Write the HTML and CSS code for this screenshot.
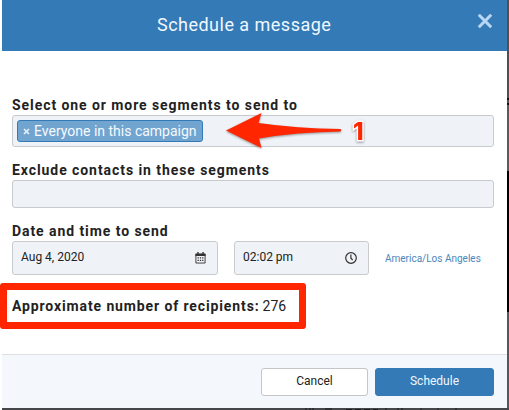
FILE: index.html
```html
<!DOCTYPE html>
<html lang="en">
<head>
<meta charset="utf-8">
<title>Schedule a message</title>
<link rel="stylesheet" href="styles.css">
</head>
<body>
<div class="screen">
  <main class="modal">
    <header class="modal-header">
      <h1 class="title"><span>Schedule a message</span></h1>
      <svg class="close" viewBox="0 0 16 16"><path d="M1.8 1.8 14.2 14.2M14.2 1.8 1.8 14.2"/></svg>
    </header>
    <section class="modal-body">
      <div class="label label-a"><span>Select one or more segments to send to</span></div>
      <div class="field segments">
        <div class="tag"><svg class="tag-x" viewBox="0 0 7 7"><path d="M1 1 6 6M6 1 1 6"/></svg><span>Everyone in this campaign</span></div>
        <svg class="arrow" viewBox="0 0 155 42"><path d="M4 19.500 39.500 2 36.500 12Q75 17.500 118.500 18Q120 19 118.500 20.500Q75 21 37 27.500L39.500 37Z"/></svg>
        <span class="marker">1</span>
      </div>
      <div class="label label-b"><span>Exclude contacts in these segments</span></div>
      <div class="field exclude"></div>
      <div class="label label-c"><span>Date and time to send</span></div>
      <div class="when">
        <div class="field date"><span>Aug 4, 2020</span>
          <svg class="calendar" viewBox="0 0 12 13"><path class="line" d="M1 2.2H11V12H1Z"/><path class="solid" d="M.5 1.8H11.500V4.300H.5ZM2.500 0H4V2.500H2.500ZM8 0H9.500V2.500H8ZM2.800 5.700H4.200V7.100H2.800ZM5.300 5.700H6.700V7.100H5.300ZM7.800 5.700H9.200V7.100H7.800ZM2.800 8.500H4.200V9.900H2.800ZM5.300 8.500H6.700V9.900H5.300ZM7.800 8.500H9.200V9.900H7.800Z"/></svg>
        </div>
        <div class="field time"><span>02:02 pm</span>
          <svg class="clock" viewBox="0 0 12 12"><circle cx="6" cy="6" r="5.300"/><path d="M5.900 2.600V6.200L7.700 8"/></svg>
        </div>
        <a class="zone"><span>America/Los Angeles</span></a>
      </div>
      <div class="recipients"><b>Approximate number of recipients:</b><span>276</span></div>
    </section>
    <footer class="modal-footer">
      <button class="btn cancel"><span>Cancel</span></button>
      <button class="btn schedule"><span>Schedule</span></button>
    </footer>
  </main>
  <div class="page-edge"></div>
  <svg class="page-below" viewBox="0 0 507 2"><path d="M304 0V2M308 0V2M311 0V2M323 1H330M344 1.500H350M353 1.500H359M362 1.500H368M371 1.500H376M384 0V2M396 0V2M400 0V2M419 .5V2M436 .5V2M454 0V2"/></svg>
</div>
</body>
</html>
```
FILE: styles.css
```css
* { box-sizing: border-box; }
body {
  margin: 0;
  width: 509px;
  height: 410px;
  overflow: hidden;
  background: #fff;
  font-family: Roboto, sans-serif;
  color: #222;
}
.screen {
  display: grid;
  grid-template-columns: 505px 2px;
  grid-template-rows: 408px 2px;
  margin-left: 2px;
  background: #454649;
}
.page-edge {
  background: linear-gradient(#4f5052 98px, #111 98px 100px, #505153 100px 103px, #111 103px 105px, #5a5b5d 105px 171px, #000 171px 312px, #55585a 312px);
}
.page-below {
  grid-column: 1 / 3;
  width: 507px;
  height: 2px;
  fill: none;
  stroke: #1b1b1d;
}
.modal {
  display: flex;
  flex-direction: column;
  background: #fff;
}
.modal-header {
  position: relative;
  height: 51px;
  background: #347ab7;
  color: #f0f8ff;
}
.title {
  margin: 0;
  padding-left: 155px;
  font-size: 18px;
  font-weight: 400;
  line-height: 49px;
  letter-spacing: .48px;
}
.close {
  position: absolute;
  left: 475px;
  top: 13px;
  width: 16px;
  height: 16px;
  fill: none;
  stroke: #b9d7f3;
  stroke-width: 3;
}
.modal-body {
  height: 303px;
  padding: 46px 13px 0 10px;
}
.label {
  padding-bottom: 2px;
  font-size: 14px;
  font-weight: 700;
  line-height: 16px;
  letter-spacing: .93px;
  white-space: nowrap;
}
.label-b { margin-top: 15px; }
.label-c { margin-top: 15px; }
.field {
  border: 1px solid #c8cacd;
  border-radius: 3px;
  background: #eff2f7;
}
.segments {
  position: relative;
  height: 32px;
  padding: 4px;
}
.tag {
  display: flex;
  align-items: center;
  gap: 4px;
  width: 186px;
  height: 22px;
  padding-left: 5px;
  border: 1px solid #347ab7;
  border-radius: 3px;
  background: #72a4d0;
  color: #f5faff;
  font-size: 14px;
  white-space: nowrap;
}
.tag-x {
  width: 7px;
  height: 7px;
  fill: none;
  stroke: #e5f0fa;
  stroke-width: 1.700;
}
.arrow {
  position: absolute;
  left: 209px;
  top: -5px;
  width: 155px;
  height: 42px;
  fill: #ff2600;
  filter: drop-shadow(0 1px 1px #0006);
}
.marker {
  position: absolute;
  left: 340px;
  top: 2px;
  color: #ff2600;
  font: 800 24px/28px Inter, sans-serif;
  -webkit-text-stroke: 3px #fff;
  paint-order: stroke fill;
  filter: drop-shadow(0 1px 1px #0006);
}
.exclude { height: 28px; }
.when {
  display: flex;
  align-items: center;
}
.date, .time {
  display: flex;
  align-items: center;
  justify-content: space-between;
  height: 34px;
  padding: 0 11px 2px 8px;
  font-size: 12px;
}
.date { width: 206px; }
.time { width: 135px; margin-left: 16px; }
.calendar, .clock { position: relative; top: 1px; }
.calendar { width: 11px; height: 12px; }
.calendar .line { fill: none; stroke: #333; }
.calendar .solid { fill: #333; }
.clock {
  width: 12px;
  height: 12px;
  fill: none;
  stroke: #333;
  stroke-width: 1.200;
}
.zone {
  margin-left: 16px;
  color: #4a87bd;
  font-size: 10px;
  white-space: nowrap;
}
.recipients {
  display: flex;
  align-items: center;
  gap: 3px;
  width: 306px;
  height: 46px;
  margin: 8px 0 0 -12px;
  padding-left: 5px;
  border: 7px solid #ff2600;
  border-radius: 3px;
  font-size: 14px;
  white-space: nowrap;
}
.recipients b { letter-spacing: .88px; }
.modal-footer {
  display: flex;
  justify-content: flex-end;
  gap: 7px;
  height: 54px;
  padding: 13px 13px 0 0;
  border-top: 1px solid #dedfe1;
  background: #f4f7fb;
}
.btn {
  height: 28px;
  padding: 0 0 2px;
  border: 1px solid #c4c6c9;
  border-radius: 3px;
  background: #fff;
  color: #222;
  font: 400 12px Roboto, sans-serif;
}
.cancel { width: 107px; }
.schedule {
  width: 119px;
  border-color: #347ab7;
  background: #347ab7;
  color: #f0f8ff;
}
```
